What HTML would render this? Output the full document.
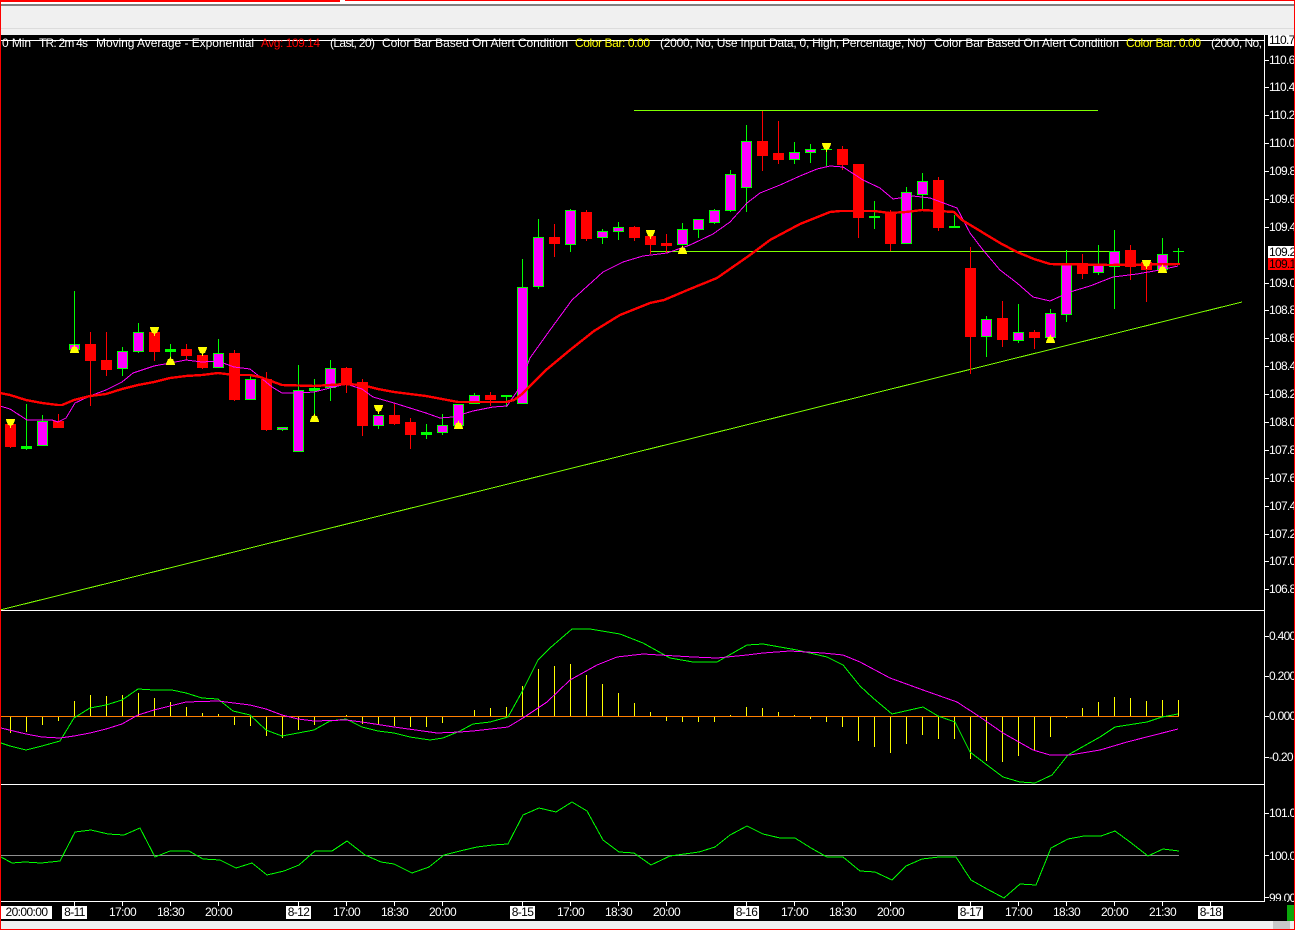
<!DOCTYPE html>
<html><head><meta charset="utf-8"><title>Chart</title>
<style>
html,body{margin:0;padding:0;background:#000;overflow:hidden}
svg{display:block}
text{font-family:"Liberation Sans",sans-serif;font-size:12px;fill:#fff}
.a{letter-spacing:-.7px}
.t{letter-spacing:-.6px;text-anchor:middle}
.k{fill:#000}
</style></head><body>
<svg width="1295" height="930" viewBox="0 0 1295 930" xmlns="http://www.w3.org/2000/svg">
<defs>
<clipPath id="hc"><rect x="1" y="35" width="1262" height="20"/></clipPath>
<clipPath id="rc"><rect x="1265" y="35" width="29" height="870"/></clipPath>
<polygon id="u" points="0.5,0 1.5,3 3,3 5,8 5,9 -4,9 -4,8 -2,3 -0.5,3"/>
<polygon id="d" points="-4,0 5,0 5,1 3,6 1.5,6 0.5,10 -0.5,6 -2,6 -4,1"/>
</defs>
<g shape-rendering="crispEdges">
<rect width="1295" height="930" fill="#000"/>
<!-- top chrome -->
<rect width="1295" height="35" fill="#f0f0f0"/>
<rect y="0" width="1295" height="4" fill="#fff"/>
<rect y="4" width="1295" height="2" fill="#808080"/>
<rect y="28" width="1295" height="1" fill="#dcdcdc"/>
<rect y="0" width="340" height="2" fill="#f00"/>
<rect x="345" y="0" width="950" height="1" fill="#f00"/>
<!-- bottom chrome -->
<rect y="921" width="1295" height="8" fill="#f0f0f0"/>
<rect x="1273" y="921" width="17" height="8" fill="#c8c8c8"/>
<rect x="1287" y="905" width="7" height="16" fill="#0aa60a"/>
<!-- guides -->
<path d="M1 40.5H1264" stroke="#fff" fill="none"/>
<path d="M1 610.5H1264M1 784.5H1264M1 901.5H1265M1264.5 35V902" stroke="#fff" fill="none"/>
<path d="M1 716.5H1179" stroke="#ff8000" fill="none"/>
<path d="M1 855.5H1179" stroke="#8f8f8f" fill="none"/>

<!-- axis ticks -->
<path stroke="#fff" fill="none" d="M1265 60.5h4M1265 87.5h4M1265 115.5h4M1265 143.5h4M1265 171.5h4M1265 199.5h4M1265 227.5h4M1265 283.5h4M1265 310.5h4M1265 338.5h4M1265 366.5h4M1265 394.5h4M1265 422.5h4M1265 450.5h4M1265 478.5h4M1265 506.5h4M1265 534.5h4M1265 561.5h4M1265 589.5h4M1265 636.5h4M1265 676.5h4M1265 716.5h4M1265 757.5h4M1265 813.5h4M1265 855.5h4M1265 897.5h4M74.5 902v4M122.5 902v4M170.5 902v4M218.5 902v4M298.5 902v4M346.5 902v4M394.5 902v4M442.5 902v4M522.5 902v4M570.5 902v4M618.5 902v4M666.5 902v4M746.5 902v4M794.5 902v4M842.5 902v4M890.5 902v4M970.5 902v4M1018.5 902v4M1066.5 902v4M1114.5 902v4M1162.5 902v4M1210.5 902v4"/>

<!-- trend lines -->
<path stroke="#7fff00" fill="none" d="M634 110.5H1098M650 251.5H1114"/>
<path stroke="#7fff00" fill="none" d="M0 610L1242 302"/>

<!-- red candles -->
<path stroke="#f00" fill="none" d="M10.5 424V448M58.5 414V428M90.5 332V406M106.5 332V376M154.5 332V361M186.5 344V360M202.5 355V369M234.5 350V401M266.5 372V431M346.5 367V393M362.5 379V436M394.5 404V425M410.5 418V449M490.5 392V406M554.5 224V257M586.5 210V241M634.5 226V241M650.5 236V254M666.5 234V253M762.5 111V171M778.5 121V164M842.5 146V170M858.5 164V238M890.5 210V251M938.5 177V231M970.5 247V374M1002.5 301V347M1034.5 330V349M1082.5 254V279M1130.5 245V280M1146.5 260V302"/>
<path stroke="#f00" stroke-width="11" fill="none" d="M10.5 424V447M58.5 421V428M90.5 344V361M106.5 360V370M154.5 332V352M186.5 349V356M202.5 355V368M234.5 353V400M266.5 379V430M346.5 368V383M362.5 382V426M394.5 415V424M410.5 422V435M490.5 395V400M554.5 237V244M586.5 212V239M634.5 227V238M650.5 236V245M666.5 243V246M762.5 141V156M778.5 153V160M842.5 149V165M858.5 164V218M890.5 213V244M938.5 180V228M970.5 268V337M1002.5 318V340M1034.5 332V338M1082.5 263V274M1130.5 250V267M1146.5 262V270"/>

<!-- green wicks -->
<path stroke="#0f0" fill="none" d="M42.5 415V446M74.5 291V350M122.5 347V376M138.5 323V353M218.5 339V368M250.5 376V400M282.5 427V431M298.5 365V452M330.5 360V401M378.5 415V429M442.5 414V435M474.5 393V404M522.5 259V404M538.5 219V289M570.5 209V252M602.5 229V244M618.5 222V240M682.5 223V245M698.5 219V238M714.5 209V224M730.5 170V212M746.5 125V212M794.5 142V164M810.5 144V163M906.5 187V244M922.5 173V209M986.5 316V357M1018.5 304V343M1050.5 309V338M1066.5 250V322M1098.5 245V275M1114.5 230V309M1162.5 238V270M26.5 404V450M170.5 344V363M314.5 379V417M426.5 424V439M506.5 395V407M826.5 149V166M874.5 201V229M954.5 215V228M1178.5 248V264"/>
<!-- green outer bodies -->
<path stroke="#0f0" stroke-width="11" fill="none" d="M42.5 421V446M74.5 344V350M122.5 351V369M138.5 332V352M218.5 353V368M250.5 379V400M282.5 427V430M298.5 390V452M330.5 368V388M378.5 415V426M442.5 425V433M458.5 404V426M474.5 395V404M522.5 287V404M538.5 237V287M570.5 210V245M602.5 231V238M618.5 227V232M682.5 229V245M698.5 219V230M714.5 210V223M730.5 174V211M746.5 141V188M794.5 152V160M810.5 149V153M906.5 192V244M922.5 181V195M986.5 319V337M1018.5 332V341M1050.5 313V338M1066.5 264V315M1098.5 265V273M1114.5 251V267M1162.5 254V270M26.5 446V449M170.5 349V352M314.5 388V391M426.5 432V435M506.5 395V397M826.5 149V150M874.5 216V218M954.5 226V228M1178.5 251V252"/>
<!-- magenta fills -->
<path stroke="#f0f" stroke-width="9" fill="none" d="M42.5 422V445M74.5 345V349M122.5 352V368M138.5 333V351M218.5 354V367M250.5 380V399M282.5 428V429M298.5 391V451M330.5 369V387M378.5 416V425M442.5 426V432M458.5 405V425M474.5 396V403M522.5 288V403M538.5 238V286M570.5 211V244M602.5 232V237M618.5 228V231M682.5 230V244M698.5 220V229M714.5 211V222M730.5 175V210M746.5 142V187M794.5 153V159M810.5 150V152M906.5 193V243M922.5 182V194M986.5 320V336M1018.5 333V340M1050.5 314V337M1066.5 265V314M1098.5 266V272M1114.5 252V266M1162.5 255V269"/>

<!-- EMA magenta (price) -->
<polyline fill="none" stroke="#f0f" points="0,406 10,409 27,420 52,420 58,422 66,418 75,403 90,396 106,390 122,382 133,373 154,366 170,363 186,360 202,362 218,361 234,367 250,369 260,377 272,387 282,393 298,393 314,392 330,388 346,384 362,389 373,397 394,403 410,408 426,413 440,418 453,417 473,411 493,407 507,406 518,390 530,358 550,330 572,300 603,272 623,262 643,256 667,253 690,245 713,234 730,222 747,203 760,193 780,185 800,176 817,169 830,166 843,167 863,180 880,188 893,199 913,196 930,198 957,208 970,233 983,250 1000,270 1017,283 1033,297 1050,301 1070,292 1090,286 1113,277 1137,274 1160,270 1178,266"/>
<!-- EMA red -->
<polyline fill="none" stroke="#f00" stroke-width="2.4" points="0,393 10,395 26,400 42,403 58,405 62,405 74,400 90,396 106,394 122,389 138,385 154,382 170,378 186,376 202,375 218,373 234,375 250,375 260,377 282,385 314,386 346,384 362,385 378,389 394,392 410,394 426,396 442,399 458,402 506,402 514,400 522,394 546,370 570,350 594,331 620,315 650,303 664,300 690,289 717,278 750,255 770,240 800,224 830,212 840,211 874,211 890,213 906,212 922,210 938,211 954,212 962,220 1000,243 1017,252 1034,259 1050,264 1110,265 1180,264"/>

<!-- markers -->
<g fill="#ff0">
<use href="#u" x="74" y="344"/><use href="#u" x="170" y="356"/><use href="#u" x="314" y="413"/><use href="#u" x="458" y="420"/><use href="#u" x="682" y="245"/><use href="#u" x="1050" y="334"/><use href="#u" x="1162" y="264"/>
<use href="#d" x="10" y="419"/><use href="#d" x="154" y="327"/><use href="#d" x="202" y="347"/><use href="#d" x="378" y="405"/><use href="#d" x="650" y="230"/><use href="#d" x="826" y="143"/><use href="#d" x="1146" y="260"/>
</g>

<!-- MACD histogram -->
<path stroke="#ff0" fill="none" d="M10.5 717V733M26.5 717V732M42.5 717V725M58.5 717V721M74.5 701V716M90.5 695V716M106.5 696V716M122.5 695V716M138.5 693V716M154.5 698V716M170.5 702V716M186.5 707V716M202.5 713V716M218.5 714V716M234.5 717V725M250.5 717V726M266.5 717V736M282.5 717V738M298.5 717V730M314.5 717V725M346.5 715V716M362.5 717V724M378.5 717V725M394.5 717V726M410.5 717V727M426.5 717V727M442.5 717V723M474.5 710V716M490.5 708V716M506.5 707V716M522.5 686V716M538.5 669V716M554.5 666V716M570.5 664V716M586.5 675V716M602.5 684V716M618.5 693V716M634.5 703V716M650.5 712V716M666.5 717V721M682.5 717V722M698.5 717V722M714.5 717V722M730.5 715V716M746.5 707V716M762.5 708V716M778.5 712V716M794.5 715V716M810.5 717V719M826.5 717V722M842.5 717V727M858.5 717V741M874.5 717V747M890.5 717V753M906.5 717V744M922.5 717V735M938.5 717V739M954.5 717V739M970.5 717V759M986.5 717V761M1002.5 717V762M1018.5 717V756M1034.5 717V750M1050.5 717V737M1066.5 717V718M1082.5 708V716M1098.5 702V716M1114.5 697V716M1130.5 698V716M1146.5 701V716M1162.5 700V716M1178.5 700V716"/>
<!-- MACD green -->
<polyline fill="none" stroke="#0f0" points="1,743 10,746 26,750 42,746 60,741 74,718 90,708 106,705 122,700 138,689 154,690 172,690 186,693 202,698 218,699 233,711 250,715 266,730 282,736 298,733 314,730 330,721 346,719 362,727 378,731 394,733 410,737 430,740 443,738 460,731 473,724 490,722 508,717 523,690 538,660 550,648 572,629 590,629 620,634 643,643 670,658 693,662 717,662 747,645 763,644 797,650 827,657 843,665 860,686 873,698 892,714 923,707 938,716 955,722 970,752 987,765 1003,777 1020,782 1035,783 1052,775 1068,755 1100,737 1115,727 1147,722 1162,717 1178,714"/>
<!-- MACD magenta -->
<polyline fill="none" stroke="#f0f" points="1,728 26,734 42,737 60,738 74,736 90,733 106,729 122,724 138,715 154,710 186,702 218,701 234,703 250,705 266,709 282,715 298,719 314,721 346,720 362,722 394,727 430,732 437,733 460,732 473,731 508,727 523,718 547,702 570,680 597,665 617,657 643,654 693,657 717,658 747,655 763,653 790,651 823,653 843,655 860,662 890,678 923,690 957,702 980,717 1003,733 1033,750 1050,755 1070,755 1100,750 1127,742 1178,729"/>
<!-- third panel -->
<polyline fill="none" stroke="#0f0" points="1,857 12,863 25,862 41,863 60,861 75,832 91,830 108,834 124,835 140,828 155,857 170,851 189,851 203,859 220,860 236,868 252,863 267,875 284,871 299,865 315,851 332,851 347,841 365,855 381,862 394,864 412,873 429,867 444,855 460,851 477,847 493,845 508,844 523,815 539,808 556,812 572,802 587,811 603,840 619,852 634,853 651,865 670,856 699,852 715,847 730,835 747,826 763,834 780,838 795,838 811,848 827,857 843,857 860,871 875,872 892,880 906,866 922,859 939,857 956,857 971,880 987,889 1004,898 1020,884 1036,885 1051,848 1068,839 1084,836 1101,836 1115,831 1130,842 1148,856 1163,849 1179,851"/>

<!-- axis label backgrounds -->
<rect x="1268" y="35" width="26" height="11" fill="#fff"/>
<rect x="1268" y="246" width="26" height="12" fill="#fff"/>
<rect x="1268" y="258" width="26" height="12" fill="#f00"/>
<!-- time label backgrounds -->
<g fill="#fff"><rect x="1" y="906" width="51" height="13"/><rect x="62" y="906" width="25" height="13"/><rect x="286" y="906" width="25" height="13"/><rect x="510" y="906" width="25" height="13"/><rect x="734" y="906" width="25" height="13"/><rect x="958" y="906" width="25" height="13"/><rect x="1198" y="906" width="25" height="13"/></g>
</g>

<!-- header text -->
<g clip-path="url(#hc)">
<text x="2" y="47" textLength="29">0 Min</text>
<text x="39" y="47" textLength="49">TR: 2m 4s</text>
<text x="96" y="47" textLength="158">Moving Average - Exponential</text>
<text x="261" y="47" textLength="59" style="fill:#f00">Avg: 109.14</text>
<text x="330" y="47" textLength="45">(Last, 20)</text>
<text x="382" y="47" textLength="186">Color Bar Based On Alert Condition</text>
<text x="575" y="47" textLength="75" style="fill:#ff0">Color Bar: 0.00</text>
<text x="660" y="47" textLength="266">(2000, No, Use Input Data, 0, High, Percentage, No)</text>
<text x="934" y="47" textLength="185">Color Bar Based On Alert Condition</text>
<text x="1126" y="47" textLength="75" style="fill:#ff0">Color Bar: 0.00</text>
<text x="1211" y="47" textLength="51">(2000, No,</text>
</g>

<!-- right axis text -->
<g clip-path="url(#rc)" class="a">
<text class="a k" x="1269" y="44">110.7</text>
<text class="a" x="1269" y="64">110.6</text>
<text class="a" x="1269" y="91">110.4</text>
<text class="a" x="1269" y="119">110.2</text>
<text class="a" x="1269" y="147">110.0</text>
<text class="a" x="1269" y="175">109.8</text>
<text class="a" x="1269" y="203">109.6</text>
<text class="a" x="1269" y="231">109.4</text>
<text class="a k" x="1269" y="256">109.2</text>
<text class="a k" x="1269" y="268">109.1</text>
<text class="a" x="1269" y="287">109.0</text>
<text class="a" x="1269" y="314">108.8</text>
<text class="a" x="1269" y="342">108.6</text>
<text class="a" x="1269" y="370">108.4</text>
<text class="a" x="1269" y="398">108.2</text>
<text class="a" x="1269" y="426">108.0</text>
<text class="a" x="1269" y="454">107.8</text>
<text class="a" x="1269" y="482">107.6</text>
<text class="a" x="1269" y="510">107.4</text>
<text class="a" x="1269" y="538">107.2</text>
<text class="a" x="1269" y="565">107.0</text>
<text class="a" x="1269" y="593">106.8</text>
<text class="a" x="1269" y="640">0.400</text>
<text class="a" x="1269" y="680">0.200</text>
<text class="a" x="1269" y="720">0.000</text>
<text class="a" x="1269" y="761">-0.20</text>
<text class="a" x="1269" y="817">101.0</text>
<text class="a" x="1269" y="860">100.0</text>
<text class="a" x="1269" y="902">99.00</text>
</g>
<rect x="1265" y="901" width="22" height="5" fill="#000"/>

<!-- time labels -->
<text class="t k" x="26.5" y="916">20:00:00</text>
<text class="t k" x="74.5" y="916">8-11</text>
<text class="t" x="122.5" y="916">17:00</text>
<text class="t" x="170.5" y="916">18:30</text>
<text class="t" x="218.5" y="916">20:00</text>
<text class="t k" x="298.5" y="916">8-12</text>
<text class="t" x="346.5" y="916">17:00</text>
<text class="t" x="394.5" y="916">18:30</text>
<text class="t" x="442.5" y="916">20:00</text>
<text class="t k" x="522.5" y="916">8-15</text>
<text class="t" x="570.5" y="916">17:00</text>
<text class="t" x="618.5" y="916">18:30</text>
<text class="t" x="666.5" y="916">20:00</text>
<text class="t k" x="746.5" y="916">8-16</text>
<text class="t" x="794.5" y="916">17:00</text>
<text class="t" x="842.5" y="916">18:30</text>
<text class="t" x="890.5" y="916">20:00</text>
<text class="t k" x="970.5" y="916">8-17</text>
<text class="t" x="1018.5" y="916">17:00</text>
<text class="t" x="1066.5" y="916">18:30</text>
<text class="t" x="1114.5" y="916">20:00</text>
<text class="t" x="1162.5" y="916">21:30</text>
<text class="t k" x="1210.5" y="916">8-18</text>

<!-- window border -->
<g shape-rendering="crispEdges" fill="#f00">
<rect x="0" y="0" width="1" height="930"/>
<rect x="1294" y="0" width="1" height="930"/>
<rect x="0" y="929" width="1295" height="1"/>
</g>
</svg>
</body></html>
